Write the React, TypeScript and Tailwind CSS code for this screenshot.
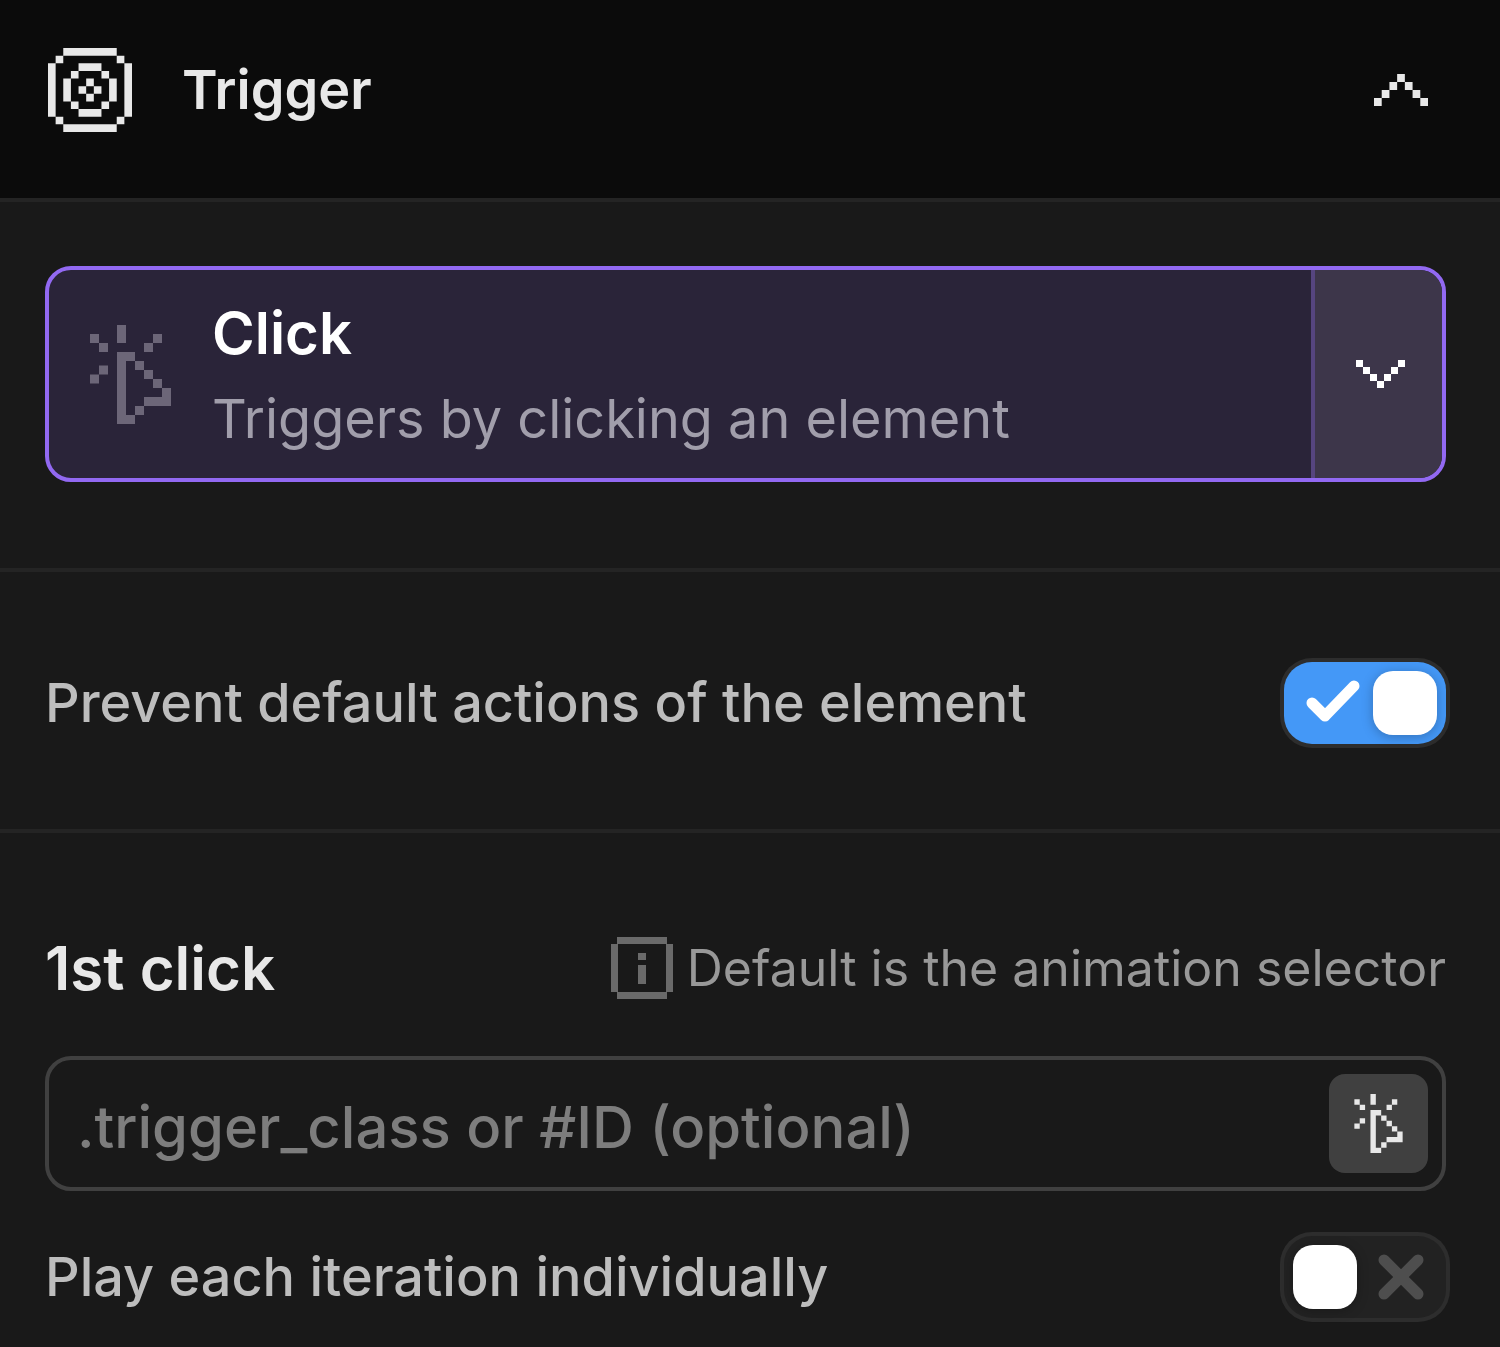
import { useState } from 'react'

const targetIcon = [
  '..#######..',
  '.#.......#.',
  '#...###...#',
  '#..#...#..#',
  '#.#..#..#.#',
  '#.#.#.#.#.#',
  '#.#..#..#.#',
  '#..#...#..#',
  '#...###...#',
  '.#.......#.',
  '..#######..',
]

const chevronDown = ['#.....#', '.#...#.', '..#.#..', '...#...']
const chevronUp = [...chevronDown].reverse()

function PixelIcon({ rows, className }: { rows: string[]; className: string }) {
  return (
    <svg
      viewBox={`0 0 ${rows[0].length} ${rows.length}`}
      fill="currentColor"
      preserveAspectRatio="none"
      className={className}
      aria-hidden
    >
      <path
        d={rows
          .flatMap((row, y) =>
            [...row].map((cell, x) => (cell === '#' ? `M${x} ${y}h1v1h-1z` : '')),
          )
          .join('')}
      />
    </svg>
  )
}

function CursorIcon({ className }: { className: string }) {
  return (
    <svg viewBox="0 0 18 22" fill="currentColor" className={className} aria-hidden>
      <path d="M6 0h2v4H6zM0 2h2v2H0zM2 4h2v2H2zM14 2h2v2h-2zM12 4h2v2h-2zM2 9h2v2H2zM0 11h2v2H0z" />
      <path
        fillRule="evenodd"
        d="M6 6h4v2h2v2h2v2h2v2h2v4h-6v2h-2v2H6zM8 8v12h2v-2h2v-2h4v-2h-2v-2h-2v-2h-2V8z"
      />
    </svg>
  )
}

function InfoIcon({ className }: { className: string }) {
  return (
    <svg viewBox="0 0 62 62" fill="currentColor" className={className} aria-hidden>
      <path d="M6 0h50v7H6zM6 55h50v7H6zM0 7h7v48H0zM55 7h7v48h-7zM27 16h8v7h-8zM27 28h8v19h-8z" />
    </svg>
  )
}

function Toggle({
  id,
  checked,
  onChange,
}: {
  id: string
  checked: boolean
  onChange: (checked: boolean) => void
}) {
  return (
    <span className="grid h-[82px] w-[162px] shrink-0">
      <input
        id={id}
        type="checkbox"
        role="switch"
        checked={checked}
        onChange={(e) => onChange(e.target.checked)}
        className="col-start-1 row-start-1 size-full cursor-pointer appearance-none rounded-[28px] bg-[#222222] ring-4 ring-[#2d2d2d] checked:bg-[#4498f7]"
      />
      <span
        className={`pointer-events-none col-start-1 row-start-1 flex items-center justify-between px-[9px] ${
          checked ? '' : 'flex-row-reverse'
        }`}
      >
        {checked ? (
          <svg viewBox="0 0 80 64" className="h-16 w-20" fill="none" aria-hidden>
            <path
              d="M19 32 L32 45 L61 15"
              stroke="#fff"
              strokeWidth="11"
              strokeLinecap="round"
              strokeLinejoin="round"
            />
          </svg>
        ) : (
          <svg viewBox="0 0 72 64" className="h-16 w-[72px]" fill="none" aria-hidden>
            <path
              d="M19 15 L53 49 M53 15 L19 49"
              stroke="#4e4e4e"
              strokeWidth="11"
              strokeLinecap="round"
            />
          </svg>
        )}
        <span className="size-16 rounded-[20px] bg-white shadow-[0_2px_12px_rgba(0,0,0,0.25)]" />
      </span>
    </span>
  )
}

export default function App() {
  const [open, setOpen] = useState(true)
  const [preventDefault, setPreventDefault] = useState(true)
  const [individually, setIndividually] = useState(false)
  const [selector, setSelector] = useState('')

  return (
    <div className="min-h-screen bg-[#191919] font-['Inter',sans-serif] text-[#bdbdbd]">
      <h2 className="border-b-4 border-[#242424] bg-[#0b0b0b]">
        <button
          type="button"
          aria-expanded={open}
          onClick={() => setOpen(!open)}
          className="flex h-[198px] w-full items-center pr-[72px] pb-[18px] pl-12 text-left text-[#e8e8e8]"
        >
          <PixelIcon rows={targetIcon} className="size-[84px]" />
          <span className="ml-[50px] flex-1 text-[54px] leading-[64px] font-semibold">
            Trigger
          </span>
          <PixelIcon rows={open ? chevronUp : chevronDown} className="h-8 w-[54px]" />
        </button>
      </h2>

      {open && (
        <>
          <section className="border-b-4 border-[#242424] pt-16 pr-[54px] pb-[86px] pl-[45px]">
            <button
              type="button"
              aria-haspopup="listbox"
              className="flex h-[216px] w-full overflow-hidden rounded-[26px] border-4 border-[#9269f2] bg-[#2a2439] text-left"
            >
              <span className="flex flex-1 items-center self-stretch pl-[41px]">
                <CursorIcon className="h-[99px] w-[81px] text-[#6c6678]" />
                <span className="ml-[41px] pt-1">
                  <span className="block text-[58px] leading-[86px] font-semibold text-white">
                    Click
                  </span>
                  <span className="block text-[54px] leading-[86px] text-[#a19eab]">
                    Triggers by clicking an element
                  </span>
                </span>
              </span>
              <span className="flex w-[131px] items-center justify-center self-stretch border-l-4 border-[#56457f] bg-[#3d364a] pl-1 text-white">
                <PixelIcon rows={chevronDown} className="h-7 w-[49px]" />
              </span>
            </button>
          </section>

          <section className="flex items-center justify-between border-b-4 border-[#242424] pt-[90px] pr-[54px] pb-[85px] pl-[45px]">
            <label htmlFor="prevent-default" className="text-[54px] leading-[80px] font-medium">
              Prevent default actions of the element
            </label>
            <Toggle
              id="prevent-default"
              checked={preventDefault}
              onChange={setPreventDefault}
            />
          </section>

          <section className="pt-[95px] pr-[54px] pl-[45px]">
            <div className="flex items-center justify-between">
              <label
                htmlFor="trigger-selector"
                className="text-[60px] leading-[80px] font-semibold text-[#e8e8e8]"
              >
                1st click
              </label>
              <p className="flex items-center gap-[14px] text-[50px] leading-[80px] text-[#989898]">
                <InfoIcon className="size-[62px] text-[#6a6a6a]" />
                Default is the animation selector
              </p>
            </div>

            <div className="mt-12 flex h-[135px] items-center rounded-[26px] border-4 border-[#404040] pr-[14px] pl-7">
              <input
                id="trigger-selector"
                type="text"
                value={selector}
                onChange={(e) => setSelector(e.target.value)}
                placeholder=".trigger_class or #ID (optional)"
                className="h-24 min-w-0 flex-1 bg-transparent pt-1.5 text-[58px] font-medium text-[#e8e8e8] outline-none placeholder:text-[#7d7d7d]"
              />
              <button
                type="button"
                aria-label="Pick element"
                className="grid size-[99px] place-items-center rounded-2xl bg-[#404040] text-[#e8e8e8]"
              >
                <CursorIcon className="h-[59px] w-[49px]" />
              </button>
            </div>

            <div className="mt-[45px] flex items-center justify-between">
              <label htmlFor="individually" className="text-[54px] leading-[80px] font-medium">
                Play each iteration individually
              </label>
              <Toggle id="individually" checked={individually} onChange={setIndividually} />
            </div>
          </section>
        </>
      )}
    </div>
  )
}
